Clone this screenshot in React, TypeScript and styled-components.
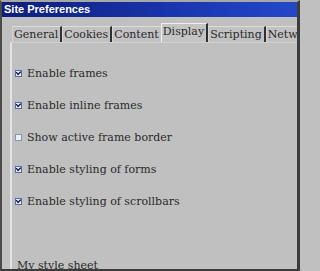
import styled, { createGlobalStyle } from "styled-components";

const GlobalStyle = createGlobalStyle`
  html, body {
    margin: 0;
    padding: 0;
    background: #c0c0c0;
  }
`;

const tabs: string[] = ["General", "Cookies", "Content", "Display", "Scripting", "Network"];

const options: { label: string; checked: boolean }[] = [
  { label: "Enable frames", checked: true },
  { label: "Enable inline frames", checked: true },
  { label: "Show active frame border", checked: false },
  { label: "Enable styling of forms", checked: true },
  { label: "Enable styling of scrollbars", checked: true },
];

const App = () => {
  return (
    <>
      <GlobalStyle />
      <Window>
        <TitleBar>Site Preferences</TitleBar>
        <Body>
          <TabRow>
            {tabs.map((name) => (
              <Tab key={name} $active={name === "Display"}>
                {name}
              </Tab>
            ))}
          </TabRow>
          <Panel>
            {options.map((opt) => (
              <OptionRow key={opt.label}>
                <CheckBox $checked={opt.checked}>
                  {opt.checked && (
                    <svg width="5" height="5" viewBox="0 0 5 5">
                      <path d="M0 1 L1 1 L2 2.5 L4 0.5 L5 0.5 L5 1.5 L2 4.5 L0 2 Z" fill="#101c60" />
                    </svg>
                  )}
                </CheckBox>
                <OptionLabel>{opt.label}</OptionLabel>
              </OptionRow>
            ))}
            <SectionLabel>My style sheet</SectionLabel>
          </Panel>
        </Body>
      </Window>
    </>
  );
};

export default App;

const Window = styled.div`
  width: 300px;
  height: 271px;
  box-sizing: border-box;
  border-top: 2px solid #a8a8a8;
  border-left: 2px solid #4a4a4a;
  border-right: 3px solid #3c3c3c;
  border-bottom: 2px solid #3c3c3c;
  background: #c0c0c0;
  overflow: hidden;
  display: flex;
  flex-direction: column;
`;

const TitleBar = styled.div`
  height: 15px;
  flex-shrink: 0;
  padding-left: 2px;
  background: linear-gradient(to right, #0c1f78, #1a36b0 60%, #2448c8);
  color: #ffffff;
  font-family: "Liberation Sans", Arial, sans-serif;
  font-weight: bold;
  font-size: 11px;
  line-height: 15px;
  white-space: nowrap;
`;

const Body = styled.div`
  flex: 1;
  padding: 8px 0 0 8px;
  display: flex;
  flex-direction: column;
  min-height: 0;
`;

const TabRow = styled.div`
  display: flex;
  align-items: flex-end;
  height: 17px;
  padding-left: 2px;
  white-space: nowrap;
`;

const Tab = styled.div<{ $active: boolean }>`
  height: ${({ $active }) => ($active ? "19px" : "16px")};
  margin-left: ${({ $active }) => ($active ? "-2px" : "0")};
  box-sizing: border-box;
  padding: 0 2px 0 1px;
  border-top: 1px solid ${({ $active }) => ($active ? "#f0f0f0" : "#dcdcdc")};
  border-left: 1px solid ${({ $active }) => ($active ? "#f0f0f0" : "#d4d4d4")};
  border-right: 2px solid #303030;
  background: ${({ $active }) => ($active ? "#c4c4c4" : "#c2c2c2")};
  font-family: "DejaVu Serif", serif;
  font-size: 11px;
  line-height: ${({ $active }) => ($active ? "16px" : "15px")};
  color: #2a2a2a;
  flex-shrink: 0;
`;

const Panel = styled.div`
  flex: 1;
  border-left: 2px solid #e4e4e4;
  border-top: 1px solid #d0d0d0;
  padding: 14px 0 0 3px;
  display: flex;
  flex-direction: column;
`;

const OptionRow = styled.div`
  height: 32px;
  display: flex;
  align-items: center;
  gap: 5px;
  flex-shrink: 0;
`;

const CheckBox = styled.span<{ $checked: boolean }>`
  width: 7px;
  height: 7px;
  box-sizing: border-box;
  border: 1px solid ${({ $checked }) => ($checked ? "#5a6a9a" : "#8a94b0")};
  background: ${({ $checked }) => ($checked ? "#e8eefa" : "#eaf0fa")};
  display: flex;
  align-items: center;
  justify-content: center;
  flex-shrink: 0;
  margin-top: 1px;
`;

const OptionLabel = styled.span`
  font-family: "DejaVu Serif", serif;
  font-size: 11px;
  color: #2a2a2a;
  white-space: nowrap;
`;

const SectionLabel = styled.div`
  flex-shrink: 0;
  margin-top: 42px;
  padding-left: 2px;
  font-family: "DejaVu Serif", serif;
  font-size: 11px;
  line-height: 14px;
  color: #2a2a2a;
`;
